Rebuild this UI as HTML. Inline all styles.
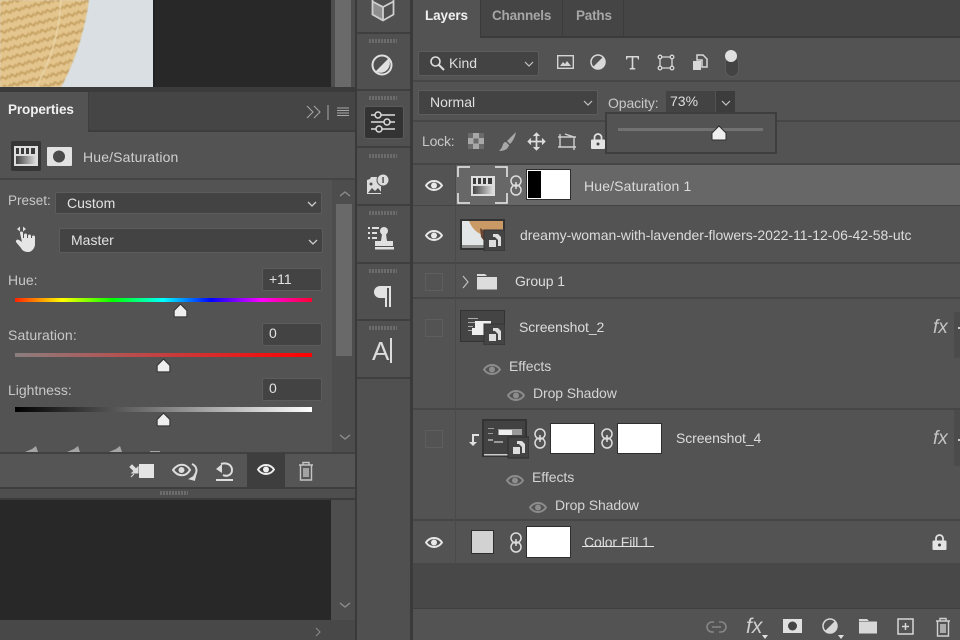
<!DOCTYPE html>
<html><head><meta charset="utf-8">
<style>
html,body{margin:0;padding:0;background:#3a3a3a}
#p{position:relative;width:960px;height:640px;overflow:hidden;background:#3c3c3c;font-family:"Liberation Sans",sans-serif;color:#d4d4d4;font-size:13.5px}
#p div,#p span,#p svg{position:absolute}
.t{white-space:nowrap;line-height:16px}
.inp{background:#434343;border:1px solid #5c5c5c;border-radius:2px;box-sizing:border-box}
.sep{background:#3f3f3f;height:1px}
.grip{width:28px;height:4px;background:repeating-linear-gradient(90deg,#6c6c6c 0 2px,#505050 2px 3px)}
.chk{width:18px;height:18px;border:1px solid #5e5e5e;box-sizing:border-box}
.wh{background:#fff;border:1px solid #2e2e2e;box-sizing:border-box}
.tab{font-weight:bold;font-size:13.5px;letter-spacing:-.1px}
.fx{font-family:"Liberation Sans",sans-serif;font-style:italic;color:#c4c4c4}
</style></head><body>
<div id="p">
<!-- canvas top -->
<div style="left:0;top:0;width:153px;height:87px;background:#d9dfe2"></div>
<svg style="left:0;top:0;filter:blur(.5px)" width="153" height="87" viewBox="0 0 153 87">
<defs><pattern id="w" width="10" height="9" patternUnits="userSpaceOnUse" patternTransform="rotate(-14)"><rect width="10" height="9" fill="#e3c58d"/><path d="M0 6l3.300-3 3.300 3 3.400-3" stroke="#c49f60" stroke-width="1.800" fill="none"/></pattern></defs>
<path d="M0 0H89C85 28 76 60 61 87H0Z" fill="url(#w)"/>
<path d="M61 0C59 35 50 62 36 87" stroke="#ecd7ab" stroke-width="1.400" fill="none"/>
</svg>
<div style="left:153px;top:0;width:2px;height:87px;background:#222"></div>
<div style="left:155px;top:0;width:176px;height:87px;background:#282828"></div>
<div style="left:331px;top:0;width:24px;height:87px;background:#4e4e4e"></div>
<div style="left:335px;top:0;width:16px;height:87px;background:#6a6a6a"></div>
<div style="left:0;top:87px;width:355px;height:5px;background:#3b3b3b"></div>

<!-- Properties -->
<div style="left:0;top:92px;width:355px;height:39px;background:#454545"></div>
<div style="left:0;top:92px;width:88px;height:40px;background:#535353;border-right:1px solid #3e3e3e"></div>
<div class="t tab" style="left:8px;top:102px;color:#f0f0f0">Properties</div>
<div style="left:89px;top:130px;width:266px;height:2px;background:#3d3d3d"></div>
<svg style="left:306px;top:104px" width="44" height="16" viewBox="0 0 44 16" fill="none" stroke="#a8a8a8"><path d="M1 2l6 6-6 6M8 2l6 6-6 6"/><path d="M22 1v15"/><path d="M31 4h12M31 6.500h12M31 9h12M31 11.500h12" stroke-width="1"/></svg>
<div style="left:0;top:132px;width:355px;height:358px;background:#535353"></div>
<div style="left:11px;top:141px;width:30px;height:30px;background:#363636;border-radius:2px"></div>
<svg style="left:14px;top:146px" width="24" height="20" viewBox="0 0 24 20"><defs><linearGradient id="g" x1="0" x2="1"><stop offset="0" stop-color="#444"/><stop offset="1" stop-color="#ddd"/></linearGradient></defs><rect width="24" height="20" fill="#ddd"/><path d="M2 2h3v6H2zM7 2h3v6H7zM12 2h3v6h-3zM17 2h4v6h-4z" fill="#3a3a3a"/><rect x="2" y="10" width="20" height="8" fill="url(#g)"/></svg>
<svg style="left:47px;top:147px" width="25" height="19" viewBox="0 0 25 19"><rect width="25" height="19" rx="1" fill="#e2e2e2"/><circle cx="12" cy="9.500" r="6" fill="#4a4a4a"/></svg>
<div class="t" style="left:83px;top:149px;color:#cfcfcf;font-size:14px;letter-spacing:.15px">Hue/Saturation</div>
<div style="left:0;top:178px;width:355px;height:2px;background:#444"></div>
<div style="left:332px;top:180px;width:23px;height:273px;background:#4d4d4d"></div>
<div style="left:336px;top:204px;width:16px;height:152px;background:#696969"></div>
<svg style="left:339px;top:190px" width="12" height="8" viewBox="0 0 12 8" fill="none" stroke="#8e8e8e" stroke-width="1.300"><path d="M1 6l5-4 5 4"/></svg>
<svg style="left:339px;top:433px" width="12" height="8" viewBox="0 0 12 8" fill="none" stroke="#8e8e8e" stroke-width="1.300"><path d="M1 2l5 4 5-4"/></svg>
<div class="t" style="left:8px;top:193px;color:#c8c8c8">Preset:</div>
<div class="inp" style="left:55px;top:192px;width:267px;height:22px"></div>
<div class="t" style="left:67px;top:195px;color:#e2e2e2;font-size:14px">Custom</div>
<svg style="left:306px;top:200px" width="12" height="8" viewBox="0 0 12 8" fill="none" stroke="#ccc" stroke-width="1.300"><path d="M2 2l4 4 4-4"/></svg>
<svg style="left:14px;top:226px" width="24" height="26" viewBox="0 0 24 26"><path d="M3 3l3-2.500v5zM12 3L9 .5v5z" fill="#ddd"/><path d="M6 7a1.500 1.500 0 0 1 3 0v5h1V9a1.500 1.500 0 0 1 3 0v3h1v-2a1.500 1.500 0 0 1 3 0v2h1v-1a1.500 1.500 0 0 1 3 0v7c0 4-3 8-7 8s-6-2-7-4l-5-6c-.5-1.500 1-3 3-2l3 2z" fill="#e6e6e6"/></svg>
<div class="inp" style="left:59px;top:228px;width:264px;height:25px"></div>
<div class="t" style="left:71px;top:232px;color:#e2e2e2;font-size:14px">Master</div>
<svg style="left:307px;top:238px" width="12" height="8" viewBox="0 0 12 8" fill="none" stroke="#ccc" stroke-width="1.300"><path d="M2 2l4 4 4-4"/></svg>

<div class="t" style="left:8px;top:272px;color:#c8c8c8;font-size:14px">Hue:</div>
<div class="inp" style="left:262px;top:268px;width:60px;height:23px"></div>
<div class="t" style="left:269px;top:271px;color:#e2e2e2;font-size:14px">+11</div>
<div style="left:15px;top:298px;width:297px;height:4px;background:linear-gradient(90deg,#f20 0%,#ff0 16%,#0f0 33%,#0ff 50%,#00f 66%,#f0f 83%,#f03 100%)"></div>
<svg style="left:172px;top:303px" width="17" height="15" viewBox="0 0 16 14"><path d="M8 1l6 6v5a1 1 0 0 1-1 1H3a1 1 0 0 1-1-1V7z" fill="#eee" stroke="#333"/></svg>

<div class="t" style="left:8px;top:327px;color:#c8c8c8;font-size:14px;letter-spacing:.1px">Saturation:</div>
<div class="inp" style="left:262px;top:323px;width:60px;height:23px"></div>
<div class="t" style="left:269px;top:325px;color:#e2e2e2;font-size:14px">0</div>
<div style="left:15px;top:353px;width:297px;height:4px;background:linear-gradient(90deg,#8b7f7f,#f00)"></div>
<svg style="left:155px;top:358px" width="17" height="15" viewBox="0 0 16 14"><path d="M8 1l6 6v5a1 1 0 0 1-1 1H3a1 1 0 0 1-1-1V7z" fill="#eee" stroke="#333"/></svg>

<div class="t" style="left:8px;top:382px;color:#c8c8c8;font-size:14px">Lightness:</div>
<div class="inp" style="left:262px;top:378px;width:60px;height:23px"></div>
<div class="t" style="left:269px;top:380px;color:#e2e2e2;font-size:14px">0</div>
<div style="left:15px;top:407px;width:297px;height:5px;background:linear-gradient(90deg,#000,#fff)"></div>
<svg style="left:155px;top:412px" width="17" height="15" viewBox="0 0 16 14"><path d="M8 1l6 6v5a1 1 0 0 1-1 1H3a1 1 0 0 1-1-1V7z" fill="#eee" stroke="#333"/></svg>
<svg style="left:20px;top:445px" width="145" height="8" viewBox="0 0 145 8" fill="#a5a5a5"><path d="M5 7l7-3 4-3 2 6zM47 7l7-3 4-3 2 6zM89 7l7-3 4-3 2 6z"/><rect x="130" y="6" width="10" height="2"/></svg>

<!-- properties footer -->
<div style="left:0;top:452px;width:355px;height:2px;background:#414141"></div>
<div style="left:0;top:454px;width:355px;height:33px;background:#555"></div>
<div style="left:247px;top:453px;width:38px;height:34px;background:#3e3e3e"></div>
<svg style="left:128px;top:461px" width="28" height="20" viewBox="0 0 28 20"><rect x="11" y="3" width="15" height="14" fill="#e4e4e4"/><path d="M2 6l4 4-2 2h6V6L8 8 4 4zM3 16l3-3" stroke="#ddd" fill="#ddd" stroke-width="1"/></svg>
<svg style="left:172px;top:461px" width="27" height="20" viewBox="0 0 27 20" fill="none"><path d="M1 9c5-7 13-7 17 0-4 7-12 7-17 0z" stroke="#ddd" stroke-width="2"/><circle cx="9.500" cy="9" r="3" fill="#ddd"/><path d="M20 3c5 2 6 8 2 12" stroke="#ddd" stroke-width="2"/><path d="M24 12v7h-7z" fill="#ddd" transform="rotate(15 20 15)"/></svg>
<svg style="left:215px;top:461px" width="20" height="21" viewBox="0 0 20 21" fill="none"><path d="M6 3c6-2 11 1 11 6s-5 7-9 5" stroke="#ddd" stroke-width="2"/><path d="M1 8l6-5v9z" fill="#ddd"/><rect x="1" y="18" width="17" height="2" fill="#ddd"/></svg>
<svg style="left:257px;top:463px" width="18" height="13" viewBox="0 0 18 13" fill="none"><path d="M1 6.500c4-6 12-6 16 0-4 6-12 6-16 0z" stroke="#eee" stroke-width="2"/><circle cx="9" cy="6.500" r="3" fill="#eee"/></svg>
<svg style="left:298px;top:461px" width="16" height="20" viewBox="0 0 16 20" fill="none" stroke="#c4c4c4" stroke-width="1.400"><path d="M1 4h14M5 4V1.500h6V4M2.500 4v15h11V4M6 7v9M8 7v9M10 7v9"/></svg>
<div style="left:0;top:487px;width:355px;height:2px;background:#3e3e3e"></div>
<div style="left:0;top:489px;width:355px;height:9px;background:#4e4e4e"></div>
<div class="grip" style="left:160px;top:491px;height:4px"></div>
<div style="left:0;top:498px;width:355px;height:2px;background:#3b3b3b"></div>

<!-- canvas bottom -->
<div style="left:0;top:500px;width:331px;height:120px;background:#282828"></div>
<div style="left:331px;top:500px;width:24px;height:120px;background:#4e4e4e"></div>
<svg style="left:339px;top:601px" width="12" height="8" viewBox="0 0 12 8" fill="none" stroke="#8e8e8e" stroke-width="1.300"><path d="M1 2l5 4 5-4"/></svg>
<div style="left:0;top:620px;width:355px;height:20px;background:#484848"></div>
<svg style="left:314px;top:627px" width="8" height="10" viewBox="0 0 8 10" fill="none" stroke="#8e8e8e"><path d="M2 1l4 4-4 4"/></svg>

<!-- Dock -->
<div style="left:355px;top:0;width:2px;height:640px;background:#3a3a3a"></div>
<div style="left:357px;top:0;width:53px;height:640px;background:#505050"></div>
<div style="left:410px;top:0;width:3px;height:640px;background:#3a3a3a"></div>
<div class="sep" style="left:357px;top:32px;width:53px;height:2px"></div>
<div class="sep" style="left:357px;top:89px;width:53px;height:2px"></div>
<div class="sep" style="left:357px;top:146px;width:53px;height:2px"></div>
<div class="sep" style="left:357px;top:204px;width:53px;height:2px"></div>
<div class="sep" style="left:357px;top:262px;width:53px;height:2px"></div>
<div class="sep" style="left:357px;top:319px;width:53px;height:2px"></div>
<div class="sep" style="left:357px;top:377px;width:53px;height:2px"></div>
<div class="grip" style="left:369px;top:39px"></div>
<div class="grip" style="left:369px;top:96px"></div>
<div class="grip" style="left:369px;top:154px"></div>
<div class="grip" style="left:369px;top:211px"></div>
<div class="grip" style="left:369px;top:269px"></div>
<div class="grip" style="left:369px;top:326px"></div>
<svg style="left:371px;top:0" width="24" height="22" viewBox="0 0 24 22"><path d="M1.500 0v14l10.500 6V7L1.500 1z" fill="#8f8f8f"/><path d="M1.500 0v14.500L12 20.500l10.500-6V0M1.500 1.500L12 7l10.500-5.500M12 7v13.500" fill="none" stroke="#cfcfcf" stroke-width="1.800"/></svg>
<svg style="left:371px;top:54px" width="22" height="22" viewBox="0 0 22 22"><circle cx="11" cy="11" r="9.500" fill="none" stroke="#e0e0e0" stroke-width="2"/><path d="M17.500 4.500A9.500 9.500 0 0 1 4.500 17.500z" fill="#e0e0e0"/></svg>
<div style="left:364px;top:106px;width:40px;height:33px;background:#333;border:1px solid #5a5a5a;border-radius:3px;box-sizing:border-box"></div>
<svg style="left:370px;top:110px" width="26" height="24" viewBox="0 0 26 24" fill="#333" stroke="#dcdcdc" stroke-width="1.500"><path d="M1 5h24M1 12h24M1 19h24"/><circle cx="8" cy="5" r="3"/><circle cx="17" cy="12" r="3"/><circle cx="9" cy="19" r="3"/></svg>
<svg style="left:366px;top:174px" width="24" height="22" viewBox="0 0 24 22"><path d="M1 6l3-1 1-2h10v17H1z" fill="#dcdcdc"/><path d="M2 19l4-5 3 3 3-3 4 5z" fill="#505050"/><circle cx="5" cy="10" r="1.500" fill="#505050"/><circle cx="17" cy="6" r="6" fill="#dcdcdc" stroke="#505050"/><rect x="16.300" y="3" width="1.500" height="6" fill="#505050"/></svg>
<svg style="left:367px;top:225px" width="28" height="26" viewBox="0 0 28 26" fill="#e0e0e0"><path d="M1 2h2v2H1zM5 2h7v2H5zM1 7h2v2H1zM5 7h5v2H5zM1 12h2v2H1zM5 12h5v2H5z"/><circle cx="17" cy="6" r="4"/><path d="M15 9h4l1 7h6v5H8v-5h6z"/><rect x="8" y="22" width="19" height="2.500"/></svg>
<svg style="left:373px;top:285px" width="20" height="22" viewBox="0 0 20 22" fill="#e2e2e2"><path d="M7 1h11v21h-2V3h-2v19h-2v-9H7A6 6 0 0 1 7 1z"/></svg>
<div class="t" style="left:372px;top:338px;font-size:26px;line-height:26px;color:#dcdcdc">A</div>
<div style="left:390px;top:338px;width:1.500px;height:25px;background:#dcdcdc"></div>

<!-- Layers panel -->
<div style="left:413px;top:0;width:547px;height:37px;background:#454545"></div>
<div style="left:413px;top:0;width:67px;height:38px;background:#535353;border-right:1px solid #3a3a3a"></div>
<div style="left:562px;top:0;width:1px;height:37px;background:#3b3b3b"></div>
<div style="left:623px;top:0;width:1px;height:37px;background:#3b3b3b"></div>
<div style="left:481px;top:36px;width:479px;height:2px;background:#3b3b3b"></div>
<div class="t tab" style="left:425px;top:8px;color:#f0f0f0">Layers</div>
<div class="t tab" style="left:492px;top:8px;color:#a6a6a6;letter-spacing:-.2px">Channels</div>
<div class="t tab" style="left:576px;top:8px;color:#a6a6a6;letter-spacing:-.2px">Paths</div>
<div style="left:413px;top:38px;width:547px;height:525px;background:#535353"></div>

<div class="inp" style="left:418px;top:51px;width:121px;height:25px"></div>
<svg style="left:429px;top:55px" width="16" height="16" viewBox="0 0 16 16" fill="none" stroke="#ddd" stroke-width="1.600"><circle cx="6.500" cy="6.500" r="4.500"/><path d="M10 10l5 5" stroke-width="2"/></svg>
<div class="t" style="left:449px;top:55px;color:#dedede;font-size:14px">Kind</div>
<svg style="left:523px;top:60px" width="12" height="8" viewBox="0 0 12 8" fill="none" stroke="#c4c4c4" stroke-width="1.200"><path d="M2 2l4 4 4-4"/></svg>
<svg style="left:557px;top:55px" width="17" height="15" viewBox="0 0 17 15"><rect x=".7" y=".7" width="15.600" height="12.600" fill="none" stroke="#d4d4d4" stroke-width="1.400"/><path d="M3 11l3-4 2 2 2-3 4 5z" fill="#d4d4d4"/></svg>
<svg style="left:590px;top:54px" width="16" height="16" viewBox="0 0 16 16"><circle cx="8" cy="8" r="7" fill="none" stroke="#d8d8d8" stroke-width="1.500"/><path d="M13 3A7 7 0 0 1 3 13z" fill="#d8d8d8"/></svg>
<svg style="left:625px;top:55px" width="15" height="15" viewBox="0 0 15 15" fill="#d8d8d8"><path d="M1 1h13v3.500h-1L12.300 2.500H8.300v10.200l2 .6V14.500H4.700v-1.200l2-.6V2.500H2.700L2 4.500H1z"/></svg>
<svg style="left:657px;top:54px" width="18" height="17" viewBox="0 0 18 17" fill="#505050" stroke="#d8d8d8" stroke-width="1.300"><path d="M3 3h12v11H3z" fill="none"/><circle cx="3" cy="3" r="1.800"/><circle cx="15" cy="3" r="1.800"/><circle cx="3" cy="14" r="1.800"/><circle cx="15" cy="14" r="1.800"/></svg>
<svg style="left:692px;top:54px" width="16" height="17" viewBox="0 0 16 17"><path d="M5 1h6l4 4v8H10V6H5z" fill="none" stroke="#d8d8d8" stroke-width="1.500"/><rect x="1" y="7" width="8" height="9" fill="#d8d8d8"/></svg>
<div style="left:725px;top:56px;width:12px;height:19px;background:#434343;border:1px solid #5c5c5c;border-radius:7px"></div>
<div style="left:725px;top:50px;width:12px;height:12px;background:#e0e0e0;border-radius:50%"></div>
<div style="left:413px;top:80px;width:547px;height:2px;background:#464646"></div>

<div class="inp" style="left:418px;top:90px;width:180px;height:25px"></div>
<div class="t" style="left:430px;top:94px;color:#dedede;font-size:14px">Normal</div>
<svg style="left:582px;top:99px" width="12" height="8" viewBox="0 0 12 8" fill="none" stroke="#c4c4c4" stroke-width="1.200"><path d="M2 2l4 4 4-4"/></svg>
<div class="t" style="left:608px;top:95px;color:#c8c8c8;font-size:14px;letter-spacing:-.1px">Opacity:</div>
<div style="left:666px;top:91px;width:49px;height:22px;background:#434343"></div>
<div class="t" style="left:670px;top:93px;color:#dedede;font-size:14px">73%</div>
<div style="left:716px;top:91px;width:19px;height:22px;background:#3c3c3c"></div>
<svg style="left:720px;top:99px" width="12" height="8" viewBox="0 0 12 8" fill="none" stroke="#c4c4c4" stroke-width="1.200"><path d="M2 2l4 4 4-4"/></svg>
<div style="left:413px;top:120px;width:547px;height:2px;background:#464646"></div>

<div class="t" style="left:422px;top:133px;color:#c8c8c8;font-size:14px;letter-spacing:-.2px">Lock:</div>
<svg style="left:468px;top:133px" width="16" height="16" viewBox="0 0 16 16"><rect width="16" height="16" fill="#a8a8a8"/><path d="M0 0h5v5H0zM11 0h5v5h-5zM5.500 5.500h5v5h-5zM0 11h5v5H0zM11 11h5v5h-5z" fill="#6b6b6b"/></svg>
<svg style="left:498px;top:131px" width="20" height="21" viewBox="0 0 20 21"><path d="M18 1L9 10l3 3c3-3 5-7 6-12z" fill="#a8a8a8"/><path d="M8 11c-3 0-3 3-4 5s-2 3-3 4c4 0 9-1 10-6z" fill="#a8a8a8"/></svg>
<svg style="left:527px;top:132px" width="19" height="19" viewBox="0 0 19 19" fill="none" stroke="#dcdcdc" stroke-width="1.700"><path d="M9.500 2v15M2 9.500h15"/><path d="M6.500 4l3-3 3 3M6.500 15l3 3 3-3M4 6.500l-3 3 3 3M15 6.500l3 3-3 3" fill="#dcdcdc" stroke-width="1"/></svg>
<svg style="left:557px;top:132px" width="20" height="19" viewBox="0 0 20 19" fill="none" stroke="#d0d0d0" stroke-width="1.400"><path d="M3 5h14v10H3zM1 5h2M17 15h2M3 2v3M17 15v3M3 15H1M17 5h2M8 2l9 3"/></svg>
<svg style="left:591px;top:133px" width="14" height="16" viewBox="0 0 14 16"><path d="M3.500 7V4.500a3.500 3.500 0 0 1 7 0V7" fill="none" stroke="#e4e4e4" stroke-width="1.700"/><rect y="6.500" width="14" height="9.500" rx="1" fill="#e4e4e4"/><circle cx="7" cy="11" r="1.500" fill="#444"/></svg>

<!-- Opacity popup -->
<div style="left:605px;top:112px;width:172px;height:42px;background:#535353;border:2px solid #3e3e3e;box-sizing:border-box"></div>
<div style="left:618px;top:128px;width:145px;height:3px;background:#727272"></div>
<svg style="left:711px;top:125px" width="16" height="16" viewBox="0 0 16 16"><path d="M8 1l7 7v6a1 1 0 0 1-1 1H2a1 1 0 0 1-1-1V8z" fill="#eee" stroke="#2e2e2e"/></svg>

<!-- rows -->
<div style="left:413px;top:163px;width:547px;height:2px;background:#464646"></div>
<div style="left:456px;top:165px;width:504px;height:40px;background:#676767"></div>
<div style="left:413px;top:205px;width:547px;height:1px;background:#444"></div>
<div style="left:413px;top:262px;width:547px;height:2px;background:#464646"></div>
<div style="left:413px;top:297px;width:547px;height:2px;background:#464646"></div>
<div style="left:413px;top:408px;width:547px;height:2px;background:#464646"></div>
<div style="left:413px;top:519px;width:547px;height:2px;background:#464646"></div>
<div style="left:455px;top:165px;width:1px;height:398px;background:#4a4a4a"></div>

<!-- row 1 -->
<svg style="left:425px;top:179px" width="18" height="13" viewBox="0 0 18 13" fill="none"><path d="M1 6.500c4-6 12-6 16 0-4 6-12 6-16 0z" stroke="#e8e8e8" stroke-width="2"/><circle cx="9" cy="6.500" r="3" fill="#e8e8e8"/></svg>
<svg style="left:457px;top:165px" width="52" height="40" viewBox="0 0 52 40" fill="none" stroke="#eee" stroke-width="1.500"><path d="M1 12V2h12M38 2h12v10M1 28v10h12M38 38h12V28"/></svg>
<svg style="left:471px;top:176px" width="24" height="20" viewBox="0 0 24 20"><rect width="24" height="20" fill="#ddd"/><path d="M2 2h3v6H2zM7 2h3v6H7zM12 2h3v6h-3zM17 2h4v6h-4z" fill="#3a3a3a"/><rect x="2" y="10" width="20" height="8" fill="url(#g)"/></svg>
<svg style="left:510px;top:175px" width="12" height="21" viewBox="0 0 12 21" fill="none" stroke="#dcdcdc" stroke-width="1.500"><rect x="1" y="1" width="10" height="10" rx="5"/><rect x="1" y="10" width="10" height="10" rx="5"/><path d="M6 7v7"/></svg>
<div class="wh" style="left:526px;top:169px;width:45px;height:31px"></div>
<div style="left:528px;top:171px;width:13px;height:27px;background:#000"></div>
<div class="t" style="left:584px;top:178px;color:#dcdcdc;font-size:14px;letter-spacing:.15px">Hue/Saturation 1</div>

<!-- row 2 -->
<svg style="left:425px;top:229px" width="18" height="13" viewBox="0 0 18 13" fill="none"><path d="M1 6.500c4-6 12-6 16 0-4 6-12 6-16 0z" stroke="#e8e8e8" stroke-width="2"/><circle cx="9" cy="6.500" r="3" fill="#e8e8e8"/></svg>
<svg style="left:460px;top:219px" width="45" height="32" viewBox="0 0 45 32"><rect width="45" height="31" fill="#333"/><rect x="2" y="2" width="41" height="27" fill="#e2e6e6"/><path d="M9 2h34v8c-4 2-7 1-10 1-3 4-2 9-5 14-3 0-3-5-4-9-6-1-12-6-15-14z" fill="#c99a66"/><path d="M20 9l6 4-1 10-4-5z" fill="#6b4630"/><path d="M2 26h22v3H2z" fill="#8b8b8b"/><rect x="24" y="11" width="21" height="21" fill="#444" stroke="#333"/><rect x="29" y="21" width="7" height="7" fill="#ddd"/><path d="M33 15h5l3 3v9h-3v-6l-3-3h-2z" fill="#ddd"/></svg>
<div class="t" style="left:520px;top:227px;color:#dcdcdc;font-size:14px;letter-spacing:-.02px">dreamy-woman-with-lavender-flowers-2022-11-12-06-42-58-utc</div>

<!-- row 3 -->
<div class="chk" style="left:425px;top:273px"></div>
<svg style="left:462px;top:275px" width="7" height="14" viewBox="0 0 7 14" fill="none" stroke="#c4c4c4" stroke-width="1.100"><path d="M1 1l5 6-5 6"/></svg>
<svg style="left:476px;top:273px" width="22" height="17" viewBox="0 0 22 17" fill="#dcdcdc"><path d="M1 1h8l2 2h-10z"/><rect x="1" y="4" width="20" height="12.500"/></svg>
<div class="t" style="left:515px;top:273px;color:#dcdcdc;font-size:14px;letter-spacing:-.1px">Group 1</div>

<!-- row 4 -->
<div class="chk" style="left:425px;top:319px"></div>
<svg style="left:460px;top:310px" width="45" height="35" viewBox="0 0 45 35"><rect width="45" height="32" fill="#333"/><rect x="1" y="1" width="43" height="30" fill="#444"/><path d="M8 8h10v1H8zM8 12h10v1H8zM8 16h5v1H8zM8 20h5v1H8z" fill="#aaa"/><path d="M15 11h16v9H15zM12 18h12v7H12z" fill="#eee"/><rect x="24" y="14" width="21" height="21" fill="#444" stroke="#333"/><rect x="29" y="24" width="7" height="7" fill="#ddd"/><path d="M33 18h5l3 3v9h-3v-6l-3-3h-2z" fill="#ddd"/></svg>
<div class="t" style="left:519px;top:319px;color:#dcdcdc;font-size:14px;letter-spacing:-.1px">Screenshot_2</div>
<svg style="left:483px;top:363px" width="18" height="13" viewBox="0 0 18 13" fill="none"><path d="M1 6.500c4-6 12-6 16 0-4 6-12 6-16 0z" stroke="#8c8c8c" stroke-width="2"/><circle cx="9" cy="6.500" r="3" fill="#8c8c8c"/></svg>
<div class="t" style="left:509px;top:358px;color:#d4d4d4;font-size:14px;letter-spacing:-.05px">Effects</div>
<svg style="left:507px;top:389px" width="18" height="13" viewBox="0 0 18 13" fill="none"><path d="M1 6.500c4-6 12-6 16 0-4 6-12 6-16 0z" stroke="#8c8c8c" stroke-width="2"/><circle cx="9" cy="6.500" r="3" fill="#8c8c8c"/></svg>
<div class="t" style="left:533px;top:385px;color:#d4d4d4;font-size:14px;letter-spacing:-.1px">Drop Shadow</div>
<div class="t fx" style="left:933px;top:318px;font-size:19px;line-height:20px">fx</div>
<div style="left:954px;top:312px;width:6px;height:46px;background:#4b4b4b"></div>
<div style="left:958px;top:327px;width:2px;height:2px;background:#ccc"></div>

<!-- row 5 -->
<div class="chk" style="left:425px;top:430px"></div>
<svg style="left:468px;top:433px" width="12" height="14" viewBox="0 0 12 14" fill="#e0e0e0"><path d="M4 1h7v2H6v6h3l-4 4-4-4h3z"/></svg>
<svg style="left:482px;top:419px" width="47" height="40" viewBox="0 0 47 40"><rect width="45" height="38" fill="#333"/><rect x="2" y="2" width="41" height="34" fill="#424242"/><path d="M6 9h6v1H6zM16 10h24v6H16zM6 14h5v1H6zM6 20h5v2H6zM12 22h9v2h-9z" fill="#999"/><path d="M17 11h13v5H17z" fill="#eee"/><rect x="2" y="35" width="26" height="1.500" fill="#ccc"/><rect x="26" y="18" width="21" height="21" fill="#444" stroke="#2e2e2e"/><rect x="31" y="28" width="7" height="7" fill="#ddd"/><path d="M35 22h5l3 3v9h-3v-6l-3-3h-2z" fill="#ddd"/></svg>
<svg style="left:534px;top:428px" width="12" height="21" viewBox="0 0 12 21" fill="none" stroke="#dcdcdc" stroke-width="1.500"><rect x="1" y="1" width="10" height="10" rx="5"/><rect x="1" y="10" width="10" height="10" rx="5"/><path d="M6 7v7"/></svg>
<div class="wh" style="left:550px;top:423px;width:45px;height:31px"></div>
<svg style="left:601px;top:428px" width="12" height="21" viewBox="0 0 12 21" fill="none" stroke="#dcdcdc" stroke-width="1.500"><rect x="1" y="1" width="10" height="10" rx="5"/><rect x="1" y="10" width="10" height="10" rx="5"/><path d="M6 7v7"/></svg>
<div class="wh" style="left:617px;top:423px;width:45px;height:31px"></div>
<div class="t" style="left:676px;top:430px;color:#dcdcdc;font-size:14px;letter-spacing:-.1px">Screenshot_4</div>
<svg style="left:506px;top:474px" width="18" height="13" viewBox="0 0 18 13" fill="none"><path d="M1 6.500c4-6 12-6 16 0-4 6-12 6-16 0z" stroke="#8c8c8c" stroke-width="2"/><circle cx="9" cy="6.500" r="3" fill="#8c8c8c"/></svg>
<div class="t" style="left:532px;top:469px;color:#d4d4d4;font-size:14px;letter-spacing:-.05px">Effects</div>
<svg style="left:529px;top:501px" width="18" height="13" viewBox="0 0 18 13" fill="none"><path d="M1 6.500c4-6 12-6 16 0-4 6-12 6-16 0z" stroke="#8c8c8c" stroke-width="2"/><circle cx="9" cy="6.500" r="3" fill="#8c8c8c"/></svg>
<div class="t" style="left:555px;top:497px;color:#d4d4d4;font-size:14px;letter-spacing:-.1px">Drop Shadow</div>
<div class="t fx" style="left:933px;top:429px;font-size:19px;line-height:20px">fx</div>
<div style="left:954px;top:410px;width:6px;height:56px;background:#4b4b4b"></div>
<div style="left:958px;top:439px;width:2px;height:2px;background:#ccc"></div>

<!-- row 6 -->
<svg style="left:425px;top:536px" width="18" height="13" viewBox="0 0 18 13" fill="none"><path d="M1 6.500c4-6 12-6 16 0-4 6-12 6-16 0z" stroke="#e8e8e8" stroke-width="2"/><circle cx="9" cy="6.500" r="3" fill="#e8e8e8"/></svg>
<div style="left:471px;top:530px;width:23px;height:24px;background:#d2d2d2;border:1px solid #2e2e2e;box-sizing:border-box"></div>
<svg style="left:510px;top:532px" width="12" height="21" viewBox="0 0 12 21" fill="none" stroke="#dcdcdc" stroke-width="1.500"><rect x="1" y="1" width="10" height="10" rx="5"/><rect x="1" y="10" width="10" height="10" rx="5"/><path d="M6 7v7"/></svg>
<div class="wh" style="left:526px;top:526px;width:45px;height:32px"></div>
<div class="t" style="left:584px;top:534px;color:#dcdcdc;font-size:14px;letter-spacing:-.1px">Color Fill 1</div>
<div style="left:582px;top:546px;width:72px;height:1px;background:#e4e4e4"></div>
<svg style="left:932px;top:534px" width="15" height="16" viewBox="0 0 14 16"><path d="M3.500 7V4.500a3.500 3.500 0 0 1 7 0V7" fill="none" stroke="#e4e4e4" stroke-width="1.700"/><rect y="6.500" width="14" height="9.500" rx="1" fill="#e4e4e4"/><circle cx="7" cy="11" r="1.500" fill="#444"/></svg>

<!-- empty + footer -->
<div style="left:413px;top:563px;width:547px;height:45px;background:#484848"></div>
<div style="left:413px;top:608px;width:547px;height:1px;background:#3f3f3f"></div>
<div style="left:413px;top:609px;width:547px;height:31px;background:#535353"></div>
<svg style="left:706px;top:620px" width="21" height="14" viewBox="0 0 21 14" fill="none" stroke="#868686" stroke-width="1.600"><path d="M8 2H6a5 5 0 0 0 0 10h2M13 2h2a5 5 0 0 1 0 10h-2M6 7h9"/></svg>
<div class="t fx" style="left:746px;top:616px;font-size:21px;line-height:22px;color:#cfcfcf">fx</div>
<svg style="left:762px;top:635px" width="6" height="4" viewBox="0 0 6 4"><path d="M0 0h6L3 4z" fill="#e0e0e0"/></svg>
<svg style="left:783px;top:619px" width="19" height="14" viewBox="0 0 19 14"><rect width="19" height="14" fill="#e0e0e0"/><circle cx="9.500" cy="7" r="4.500" fill="#444"/></svg>
<svg style="left:822px;top:618px" width="18" height="18" viewBox="0 0 18 18"><circle cx="8" cy="8" r="7" fill="none" stroke="#d8d8d8" stroke-width="1.500"/><path d="M13 3A7 7 0 0 1 3 13z" fill="#d8d8d8"/></svg>
<svg style="left:838px;top:635px" width="6" height="4" viewBox="0 0 6 4"><path d="M0 0h6L3 4z" fill="#e0e0e0"/></svg>
<svg style="left:859px;top:618px" width="19" height="16" viewBox="0 0 19 16" fill="#d8d8d8"><path d="M0 1h8l2 2H0z"/><rect y="3.500" width="18" height="12"/></svg>
<svg style="left:897px;top:618px" width="17" height="17" viewBox="0 0 17 17" fill="none" stroke="#d8d8d8" stroke-width="1.500"><rect x="1" y="1" width="15" height="15"/><path d="M5 8.500h7M8.500 5v7"/></svg>
<svg style="left:935px;top:617px" width="16" height="20" viewBox="0 0 16 20" fill="none" stroke="#d0d0d0" stroke-width="1.400"><path d="M1 4h14M5 4V1.500h6V4M2.500 4v15h11V4M6 7v9M8 7v9M10 7v9"/></svg>
</div>
</body></html>
